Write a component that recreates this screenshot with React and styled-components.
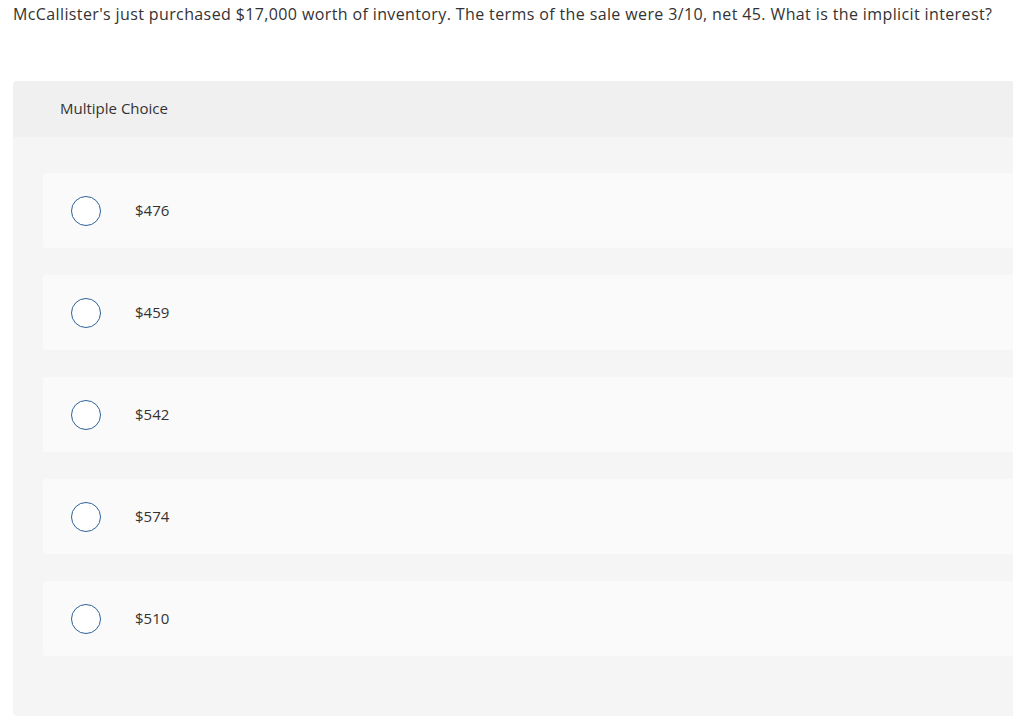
import React from "react";
import styled, { createGlobalStyle } from "styled-components";

const GlobalStyle = createGlobalStyle`
  html, body {
    margin: 0;
    padding: 0;
    background: #ffffff;
    overflow: hidden;
  }
  body {
    font-family: "Open Sans", "Liberation Sans", sans-serif;
    color: #333333;
  }
`;

const choices = ["$476", "$459", "$542", "$574", "$510"];

export default function App() {
  return (
    <>
      <GlobalStyle />
      <Page>
        <Question>
          McCallister's just purchased $17,000 worth of inventory. The terms of
          the sale were 3/10, net 45. What is the implicit interest?
        </Question>

        <Panel>
          <PanelHeader>Multiple Choice</PanelHeader>
          <ChoiceList>
            {choices.map((c) => (
              <ChoiceRow key={c}>
                <Radio />
                <ChoiceText>{c}</ChoiceText>
              </ChoiceRow>
            ))}
          </ChoiceList>
        </Panel>
      </Page>
    </>
  );
}

const Page = styled.div`
  width: 1040px;
  padding: 4px 0 0 13px;
`;

const Question = styled.div`
  font-size: 16px;
  line-height: 20px;
  letter-spacing: 0.38px;
  color: #333333;
  white-space: nowrap;
`;

const Panel = styled.div`
  margin-top: 57px;
  background-color: #f5f5f5;
  border-radius: 4px;
  overflow: hidden;
  padding-bottom: 60px;
`;

const PanelHeader = styled.div`
  height: 56px;
  display: flex;
  align-items: center;
  padding: 0 0 2px 47px;
  box-sizing: border-box;
  background-color: #f0f0f0;
  font-size: 15px;
  color: #333333;
`;

const ChoiceList = styled.div`
  display: flex;
  flex-direction: column;
  gap: 27px;
  padding: 36px 0 0 30px;
`;

const ChoiceRow = styled.div`
  height: 75px;
  display: flex;
  align-items: center;
  background-color: #fafafa;
  border-radius: 3px;
  padding-left: 28px;
`;

const Radio = styled.span`
  width: 28px;
  height: 28px;
  border: 1.5px solid #2f6296;
  border-radius: 50%;
  background-color: #ffffff;
  flex-shrink: 0;
`;

const ChoiceText = styled.span`
  margin-left: 34px;
  font-size: 15px;
  color: #333333;
  padding-bottom: 2px;
`;
